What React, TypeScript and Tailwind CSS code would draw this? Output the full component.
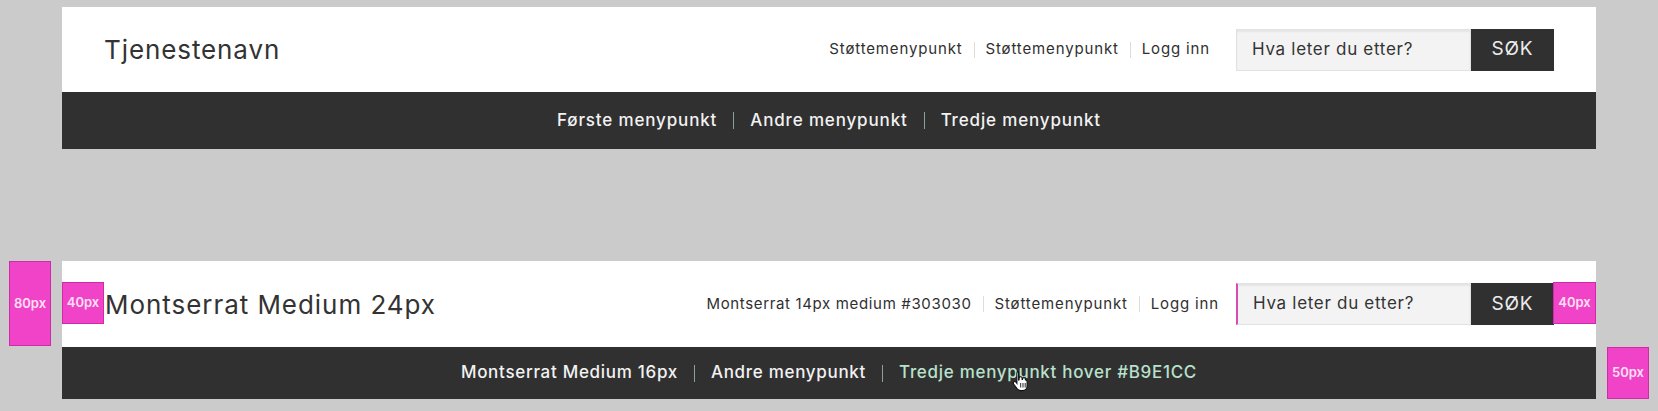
import React from "react";

const font = { fontFamily: "Inter, 'Noto Sans', sans-serif" };

function SupportLinks({ first, firstTracking }: { first: string; firstTracking?: boolean }) {
  return (
    <div className="flex items-center text-[15px] font-normal text-[#303030] tracking-[0.85px]">
      <span className={firstTracking ? "tracking-[0.65px]" : ""}>{first}</span>
      <span className="mx-[11px] h-[16px] w-px bg-[#dcdcdc]" />
      <span>Støttemenypunkt</span>
      <span className="mx-[11px] h-[16px] w-px bg-[#dcdcdc]" />
      <span>Logg inn</span>
    </div>
  );
}

function Search({ annotated }: { annotated?: boolean }) {
  return (
    <div className="flex h-[42px]">
      <div
        className={
          "flex h-full w-[235px] items-center border border-[#e2e2e2] bg-[#f3f3f3] pl-[15px] text-[17px] font-normal text-[#333] tracking-[0.7px] shadow-[inset_0_2px_2px_rgba(0,0,0,0.06)] " +
          (annotated ? "border-l-2 border-l-[#d64bb8]" : "")
        }
      >
        Hva leter du etter?
      </div>
      <div className="flex h-full w-[83px] items-center justify-center bg-[#303030] text-[19px] font-normal text-[#ececec] tracking-[0.8px]">
        SØK
      </div>
    </div>
  );
}

function NavSep() {
  return <span className="mx-[16px] h-[17px] w-px bg-[#86a595]" />;
}

function Tag({ label, className }: { label: string; className: string }) {
  return (
    <div
      className={
        "absolute flex items-center justify-center border border-[#cf2aa8] bg-[#f043c8] text-[13px] font-semibold text-[#ffe0f5] " +
        className
      }
    >
      {label}
    </div>
  );
}

function Cursor() {
  return (
    <svg
      className="absolute left-[1012px] top-[370px]"
      width="18"
      height="22"
      viewBox="0 0 18 22"
    >
      <path
        d="M5 1.5c.9 0 1.6.7 1.6 1.6V10l.5-.1V8.2c0-.9.7-1.5 1.5-1.5s1.5.6 1.5 1.5v1.3h.4V9c0-.8.7-1.4 1.5-1.4s1.4.6 1.4 1.4v1h.3c.8 0 1.4.6 1.4 1.4V16c0 2.6-2 4.6-4.6 4.6H8.6c-1.4 0-2.6-.6-3.4-1.7L1.6 14c-.5-.7-.4-1.6.3-2.1.7-.5 1.6-.3 2.1.3l.9 1.2V3.1c0-.9.7-1.6 1.6-1.6z"
        fill="#fff"
        stroke="#111"
        strokeWidth="1.1"
      />
      <path d="M8.7 13v4.5M11 13v4.5M13.2 13v4.5" stroke="#111" strokeWidth="0.9" />
    </svg>
  );
}

export default function App() {
  return (
    <div className="relative h-[411px] w-[1658px] overflow-hidden bg-[#cbcbcb]" style={font}>
      {/* Panel 1 */}
      <div className="mx-[62px] pt-[7px]">
        <header className="flex h-[85px] items-center bg-white px-[42px]">
          <div className="text-[26px] font-normal text-[#333] tracking-[0.9px]">Tjenestenavn</div>
          <div className="ml-auto flex items-center">
            <SupportLinks first="Støttemenypunkt" />
            <div className="ml-[26px]">
              <Search />
            </div>
          </div>
        </header>
        <nav className="flex h-[57px] items-center justify-center bg-[#303030] text-[17px] font-medium text-[#f2f2f2] tracking-[0.85px]">
          <span>Første menypunkt</span>
          <NavSep />
          <span>Andre menypunkt</span>
          <NavSep />
          <span>Tredje menypunkt</span>
        </nav>
      </div>

      {/* Panel 2 */}
      <div className="mx-[62px] mt-[112px]">
        <header className="flex h-[86px] items-center bg-white pr-[42px]">
          <div className="w-[43px]" />
          <div className="text-[26px] font-normal text-[#333] tracking-[0.95px]">Montserrat Medium 24px</div>
          <div className="ml-auto flex items-center">
            <SupportLinks first="Montserrat 14px medium #303030" firstTracking />
            <div className="ml-[17px]">
              <Search annotated />
            </div>
          </div>
        </header>
        <nav className="flex h-[52px] items-center justify-center bg-[#303030] text-[17px] font-medium text-[#f2f2f2] tracking-[0.7px]">
          <span>Montserrat Medium 16px</span>
          <NavSep />
          <span>Andre menypunkt</span>
          <NavSep />
          <span className="text-[#b9e1cc]">Tredje menypunkt hover #B9E1CC</span>
        </nav>
      </div>

      <Tag label="80px" className="left-[9px] top-[261px] h-[85px] w-[42px]" />
      <Tag label="40px" className="left-[62px] top-[282px] h-[42px] w-[42px]" />
      <Tag label="40px" className="left-[1553px] top-[282px] h-[42px] w-[43px]" />
      <Tag label="50px" className="left-[1607px] top-[347px] h-[52px] w-[42px]" />
      <Cursor />
    </div>
  );
}
